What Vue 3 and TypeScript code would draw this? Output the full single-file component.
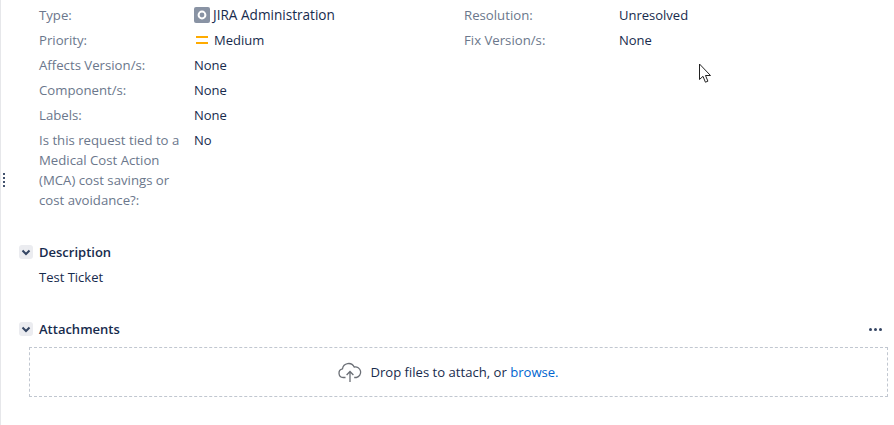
<template>
  <div class="page">
    <div class="details">
      <div class="col">
        <div v-for="row in leftRows" :key="row.label" class="row">
          <div class="label">{{ row.label }}</div>
          <div class="value">
            <svg v-if="row.icon === 'type'" class="ic-type" width="16" height="16" viewBox="0 0 16 16">
              <rect width="16" height="16" rx="2" fill="#8993a4" />
              <circle cx="8" cy="8" r="3.4" fill="none" stroke="#fff" stroke-width="2" />
            </svg>
            <svg v-if="row.icon === 'priority'" class="ic-prio" width="16" height="16" viewBox="0 0 16 16">
              <rect x="2" y="4" width="12" height="2" fill="#ffab00" />
              <rect x="2" y="10" width="12" height="2" fill="#ffab00" />
            </svg>
            <span :class="{ 'type-name': row.icon === 'type' }">{{ row.value }}</span>
          </div>
        </div>
      </div>
      <div class="col col-right">
        <div v-for="row in rightRows" :key="row.label" class="row">
          <div class="label">{{ row.label }}</div>
          <div class="value">{{ row.value }}</div>
        </div>
      </div>
    </div>

    <section class="module description">
      <div class="mod-head">
        <span class="twixie"><svg width="14" height="14" viewBox="0 0 14 14"><path d="M3.5 5.5 7 9l3.5-3.5" fill="none" stroke="#344563" stroke-width="2" /></svg></span>
        <h4>Description</h4>
      </div>
      <div class="mod-body">Test Ticket</div>
    </section>

    <section class="module attachments">
      <div class="mod-head">
        <span class="twixie"><svg width="14" height="14" viewBox="0 0 14 14"><path d="M3.5 5.5 7 9l3.5-3.5" fill="none" stroke="#344563" stroke-width="2" /></svg></span>
        <h4>Attachments</h4>
        <span class="more"><i></i><i></i><i></i></span>
      </div>
      <div class="dropzone">
        <svg width="24" height="20" viewBox="0 0 24 20" fill="none" stroke="#6b6f76" stroke-width="1.3">
          <path d="M7.5 15.5H5.2a4.4 4.4 0 0 1-.7-8.7A6.2 6.2 0 0 1 16.2 5a5.3 5.3 0 0 1 2.2 10.5h-2.2" />
          <path d="M12 20V9.5M8.6 13 12 9.5l3.4 3.5" />
        </svg>
        <span class="drop-text">Drop files to attach, or <a href="#" @click.prevent>browse.</a></span>
      </div>
    </section>

    <div class="handle"><i></i><i></i><i></i><i></i></div>
    <svg class="cursor" width="14" height="21" viewBox="0 0 14 21">
      <path d="M1.5 1v15.5l3.5-3.2 2.4 5.9 2.5-1-2.4-5.7h5z" fill="#fff" stroke="#222" stroke-width="1" />
    </svg>
  </div>
</template>

<script setup lang="ts">
interface Row {
  label: string
  value: string
  icon?: 'type' | 'priority'
}

const leftRows: Row[] = [
  { label: 'Type:', value: 'JIRA Administration', icon: 'type' },
  { label: 'Priority:', value: 'Medium', icon: 'priority' },
  { label: 'Affects Version/s:', value: 'None' },
  { label: 'Component/s:', value: 'None' },
  { label: 'Labels:', value: 'None' },
  { label: 'Is this request tied to a Medical Cost Action (MCA) cost savings or cost avoidance?:', value: 'No' }
]

const rightRows: Row[] = [
  { label: 'Resolution:', value: 'Unresolved' },
  { label: 'Fix Version/s:', value: 'None' }
]
</script>

<style>
html, body {
  background: #fff;
  overflow: hidden;
}
</style>

<style scoped>
.page {
  position: relative;
  width: 894px;
  height: 425px;
  box-sizing: border-box;
  border-left: 1px solid #e6e7ea;
  overflow: hidden;
  background: #fff;
  font-family: "Open Sans", "Noto Sans", sans-serif;
  font-size: 13px;
  line-height: 20px;
  color: #172b4d;
}

.details {
  display: grid;
  grid-template-columns: 425px 1fr;
  padding: 5px 0 0 38px;
}

.col {
  display: flex;
  flex-direction: column;
  gap: 5px;
}

.row {
  display: grid;
  grid-template-columns: 145px 1fr;
  column-gap: 10px;
}

.label {
  color: #6b778c;
  font-size: 13.2px;
}

.value {
  display: flex;
  align-items: center;
  align-self: start;
  height: 20px;
}

.type-name {
  font-size: 13.6px;
}

.ic-type {
  margin-right: 3px;
}

.ic-prio {
  margin-right: 4px;
}

.module {
  padding-left: 18px;
}

.description {
  margin-top: 32px;
}

.attachments {
  margin-top: 32px;
}

.mod-head {
  display: flex;
  align-items: center;
  height: 20px;
  padding-right: 6px;
}

.twixie {
  display: flex;
  align-items: center;
  justify-content: center;
  width: 14px;
  height: 14px;
  margin-right: 6px;
  border-radius: 3px;
  background: #ebecf0;
}

h4 {
  margin: 0;
  font-size: 13px;
  font-weight: 600;
  color: #172b4d;
  flex: 1;
}

.more {
  display: flex;
  gap: 2px;
  margin-right: 6px;
}

.more i {
  width: 3px;
  height: 3px;
  border-radius: 50%;
  background: #344563;
}

.mod-body {
  margin: 5px 0 0 20px;
}

.dropzone {
  display: flex;
  align-items: center;
  justify-content: center;
  gap: 8px;
  height: 50px;
  box-sizing: border-box;
  margin: 8px 0 0 10px;
  width: 859px;
  padding-right: 20px;
  border: 1px dashed #c1c7d0;
}

.drop-text {
  font-size: 13.1px;
}

.dropzone a {
  color: #0065d0;
  text-decoration: none;
}

.handle {
  position: absolute;
  left: 2px;
  top: 173px;
  display: flex;
  flex-direction: column;
  gap: 2px;
}

.handle i {
  width: 2px;
  height: 2px;
  background: #42526e;
}

.cursor {
  position: absolute;
  left: 697px;
  top: 63px;
}
</style>
